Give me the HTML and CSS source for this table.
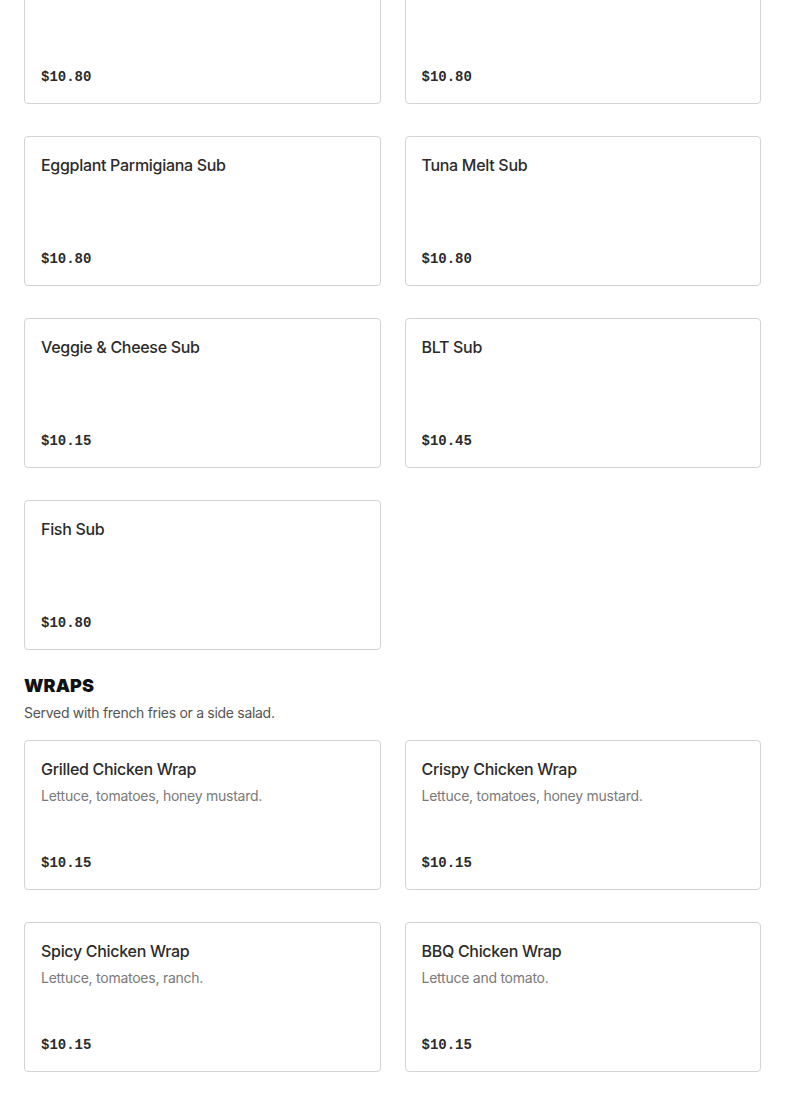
FILE: index.html
```html
<!DOCTYPE html>
<html lang="en">
<head>
<meta charset="utf-8">
<title>Menu</title>
<link rel="stylesheet" href="styles.css">
</head>
<body>
<main class="menu">
  <section class="section section-subs">
    <div class="grid">
      <div class="card"><h3 class="item-name">Chicken Parmigiana Sub</h3><p class="item-price">$10.80</p></div>
      <div class="card"><h3 class="item-name">Meatball Parmigiana Sub</h3><p class="item-price">$10.80</p></div>
      <div class="card"><h3 class="item-name">Eggplant Parmigiana Sub</h3><p class="item-price">$10.80</p></div>
      <div class="card"><h3 class="item-name">Tuna Melt Sub</h3><p class="item-price">$10.80</p></div>
      <div class="card"><h3 class="item-name">Veggie &amp; Cheese Sub</h3><p class="item-price">$10.15</p></div>
      <div class="card"><h3 class="item-name">BLT Sub</h3><p class="item-price">$10.45</p></div>
      <div class="card"><h3 class="item-name">Fish Sub</h3><p class="item-price">$10.80</p></div>
    </div>
  </section>
  <section class="section">
    <h2 class="section-title">WRAPS</h2>
    <p class="section-desc">Served with french fries or a side salad.</p>
    <div class="grid">
      <div class="card"><h3 class="item-name">Grilled Chicken Wrap</h3><p class="item-desc">Lettuce, tomatoes, honey mustard.</p><p class="item-price">$10.15</p></div>
      <div class="card"><h3 class="item-name">Crispy Chicken Wrap</h3><p class="item-desc">Lettuce, tomatoes, honey mustard.</p><p class="item-price">$10.15</p></div>
      <div class="card"><h3 class="item-name">Spicy Chicken Wrap</h3><p class="item-desc">Lettuce, tomatoes, ranch.</p><p class="item-price">$10.15</p></div>
      <div class="card"><h3 class="item-name">BBQ Chicken Wrap</h3><p class="item-desc">Lettuce and tomato.</p><p class="item-price">$10.15</p></div>
    </div>
  </section>
</main>
</body>
</html>
```
FILE: styles.css
```css
* { box-sizing: border-box; }
html, body { margin: 0; padding: 0; background: #fff; }
body {
  font-family: Inter, "Liberation Sans", sans-serif;
  color: #2b2b2b;
}
.menu {
  padding: 0 24px 40px;
}
.section-subs {
  margin-top: -46px;
}
.section + .section {
  margin-top: 24px;
}
.grid {
  display: grid;
  grid-template-columns: 1fr 1fr;
  column-gap: 24px;
  row-gap: 32px;
}
.card {
  height: 150px;
  border: 1px solid #d3d3d3;
  border-radius: 4px;
  padding: 16px 16px 15px;
  display: flex;
  flex-direction: column;
}
.item-name {
  margin: 0;
  font-size: 16px;
  line-height: 24px;
  font-weight: 500;
  letter-spacing: -0.3px;
  color: #2b2b2b;
}
.item-desc {
  margin: 5px 0 0;
  font-size: 14px;
  line-height: 20px;
  letter-spacing: -0.25px;
  color: #7a7a7a;
}
.item-price {
  margin: auto 0 0;
  font-family: "Liberation Mono", "DejaVu Sans Mono", monospace;
  font-weight: 700;
  font-size: 14px;
  line-height: 22px;
  color: #2b2b2b;
}
.section-title {
  margin: 0;
  font-size: 18px;
  line-height: 24px;
  font-weight: 900;
  color: #111;
  letter-spacing: 0.1px;
}
.section-desc {
  margin: 5px 0 17px;
  font-size: 14px;
  line-height: 20px;
  letter-spacing: -0.3px;
  color: #555;
}
```
